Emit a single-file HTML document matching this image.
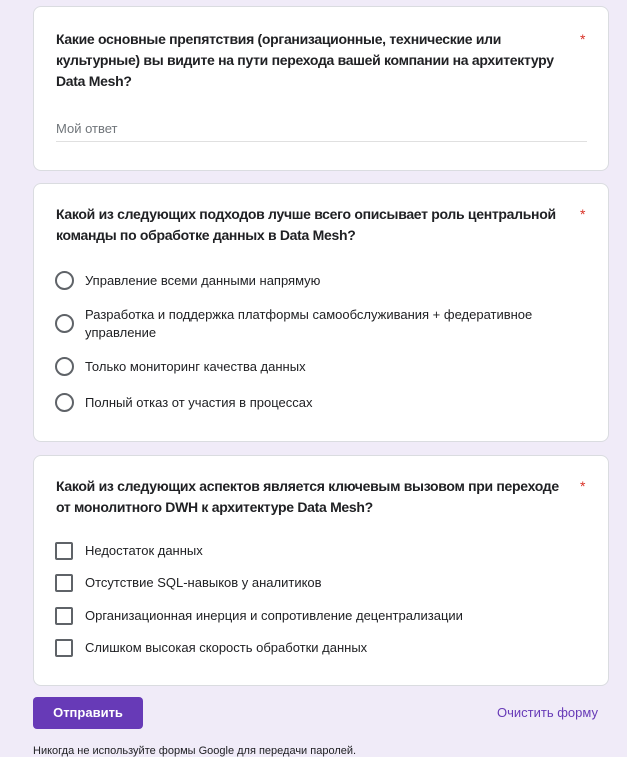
<!DOCTYPE html>
<html><head><meta charset="utf-8"><style>
*{margin:0;padding:0;box-sizing:border-box}
body{width:627px;height:752px;overflow:hidden;background:#f0ebf8;font-family:"Liberation Sans",Arial,sans-serif;position:relative;color:#202124}
.card{position:absolute;left:33px;width:576px;background:#fff;border:1px solid #dadce0;border-radius:8px}
.q{position:absolute;left:22px;width:560px;font-size:14px;font-weight:bold;line-height:21px;color:#202124;letter-spacing:-0.3px;white-space:nowrap}
.star{position:absolute;left:546px;color:#d93025;font-size:14px}
.opt{position:absolute;left:51px;width:480px;font-size:13px;line-height:18px;color:#202124}
.rad{position:absolute;left:21px;width:19px;height:19px;border:2px solid #5f6368;border-radius:50%}
.chk{position:absolute;left:21px;width:18px;height:18px;border:2px solid #5f6368;border-radius:2px}
</style></head><body>
<div class="card" style="top:6px;height:165px">
<div class="q" style="top:22px">Какие основные препятствия (организационные, технические или<br>культурные) вы видите на пути перехода вашей компании на архитектуру<br>Data Mesh?</div>
<div class="star" style="top:24px">*</div>
<div style="position:absolute;left:22px;top:114px;font-size:13px;color:#70757a">Мой ответ</div>
<div style="position:absolute;left:22px;top:134px;width:531px;border-top:1px solid #e0e0e0"></div>
</div>
<div class="card" style="top:183px;height:259px">
<div class="q" style="top:20px">Какой из следующих подходов лучше всего описывает роль центральной<br>команды по обработке данных в Data Mesh?</div>
<div class="star" style="top:22px">*</div>
<div class="rad" style="top:87px"></div><div class="opt" style="top:88px">Управление всеми данными напрямую</div>
<div class="rad" style="top:130px"></div><div class="opt" style="top:122px">Разработка и поддержка платформы самообслуживания + федеративное<br>управление</div>
<div class="rad" style="top:173px"></div><div class="opt" style="top:174px">Только мониторинг качества данных</div>
<div class="rad" style="top:209px"></div><div class="opt" style="top:210px">Полный отказ от участия в процессах</div>
</div>
<div class="card" style="top:455px;height:231px">
<div class="q" style="top:20px">Какой из следующих аспектов является ключевым вызовом при переходе<br>от монолитного DWH к архитектуре Data Mesh?</div>
<div class="star" style="top:22px">*</div>
<div class="chk" style="top:86px"></div><div class="opt" style="top:86px">Недостаток данных</div>
<div class="chk" style="top:118px"></div><div class="opt" style="top:118px">Отсутствие SQL-навыков у аналитиков</div>
<div class="chk" style="top:151px"></div><div class="opt" style="top:151px">Организационная инерция и сопротивление децентрализации</div>
<div class="chk" style="top:183px"></div><div class="opt" style="top:183px">Слишком высокая скорость обработки данных</div>
</div>
<div style="position:absolute;left:33px;top:697px;width:110px;height:32px;background:#673ab7;border-radius:4px;color:#fff;font-size:13px;font-weight:bold;text-align:center;line-height:32px">Отправить</div>
<div style="position:absolute;left:497px;top:705px;font-size:13px;color:#673ab7">Очистить форму</div>
<div style="position:absolute;left:33px;top:745px;font-size:11px;color:#202124">Никогда не используйте формы Google для передачи паролей.</div>
</body></html>
